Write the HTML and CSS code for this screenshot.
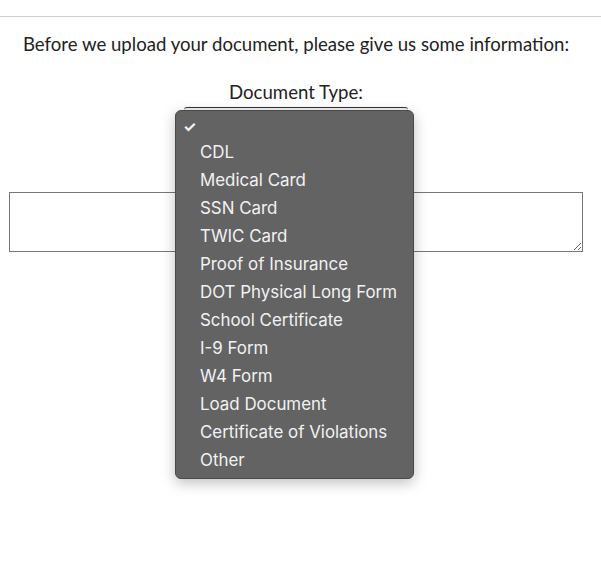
FILE: index.html
```html
<!DOCTYPE html>
<html lang="en">
  <head>
    <meta charset="UTF-8" />
    <meta name="viewport" content="width=device-width, initial-scale=1.0" />
    <title>Upload Document</title>
    <link rel="stylesheet" href="styles.css">
  </head>
  <body>
    <div class="topline"></div>

    <div class="upload-form">
      <p class="intro">Before we upload your document, please give us some information:</p>

      <label class="field-label" for="doc-type">Document Type:</label>
      <div class="select-wrap">
        <div class="select-box" id="doc-type"></div>

        <!-- open dropdown menu -->
        <ul class="menu">
          <li class="selected"><span class="check">&#10003;</span></li>
          <li>CDL</li>
          <li>Medical Card</li>
          <li>SSN Card</li>
          <li>TWIC Card</li>
          <li>Proof of Insurance</li>
          <li>DOT Physical Long Form</li>
          <li>School Certificate</li>
          <li>I-9 Form</li>
          <li>W4 Form</li>
          <li>Load Document</li>
          <li>Certificate of Violations</li>
          <li>Other</li>
        </ul>
      </div>

      <textarea class="notes"></textarea>
    </div>
  </body>
</html>
```

FILE: styles.css
```css
html,
body {
  min-height: 100%;
}
body {
  margin: 0;
  min-height: 577px;
  font-family: Lato, "Noto Sans", sans-serif;
  color: #222;
  background-color: #fff;
}
.topline {
  height: 16px;
  border-bottom: 1px solid #d0d0d0;
}
.upload-form {
  display: flex;
  flex-direction: column;
  align-items: center;
  padding: 0 18px 260px 9px;
}
.intro {
  margin: 15px 0 0;
  font-size: 18.6px;
  line-height: 24px;
}
.field-label {
  margin-top: 24px;
  font-size: 18.6px;
  line-height: 24px;
}
.select-wrap {
  position: relative;
  margin-top: 3px;
  width: 224px;
}
.select-box {
  height: 20px;
  border-top: 1px solid #333;
  border-radius: 3px;
  background: #f3f3f3;
}
.menu {
  position: absolute;
  top: 3px;
  left: -9px;
  width: 239px;
  margin: 0;
  padding: 1px 0 3px;
  list-style: none;
  background-color: #636364;
  border: 1px solid #4a4a4a;
  border-radius: 6px;
  box-shadow: 0 4px 14px rgba(0, 0, 0, 0.25);
  box-sizing: border-box;
  z-index: 2;
}
.menu li {
  height: 28px;
  line-height: 26px;
  padding-left: 24px;
  font-family: Inter, "Noto Sans", sans-serif;
  font-size: 16.9px;
  color: #f2f2f2;
  position: relative;
}
.menu li.selected {
  height: 27px;
  line-height: 29px;
}
.menu .check {
  position: absolute;
  left: 7px;
  font-size: 15px;
  font-weight: bold;
}
.notes {
  align-self: stretch;
  margin-top: 64px;
  height: 60px;
  border: 1px solid #777;
  box-sizing: border-box;
  width: 574px;
}
```
